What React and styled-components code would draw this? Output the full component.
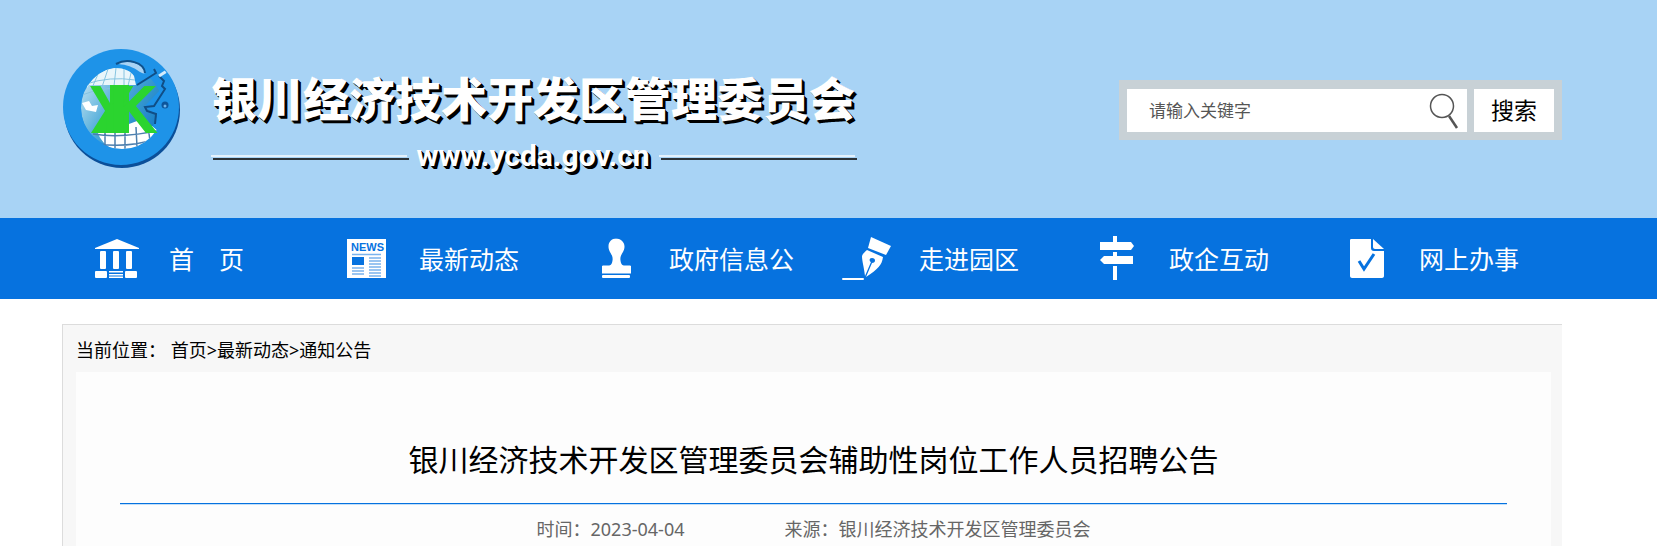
import styled, { createGlobalStyle } from "styled-components";

const GlobalStyle = createGlobalStyle`
  * {
    box-sizing: border-box;
  }
  body {
    margin: 0;
    background: #fff;
    color: #000;
    font-family: "Noto Sans", "Noto Sans CJK SC", sans-serif;
    font-size: 18px;
  }
  a {
    color: inherit;
    text-decoration: none;
  }
`;

const Container = styled.div`
  margin: 0 95px 0 62px;
`;

const Header = styled.header`
  background: #a8d3f5;
  height: 218px;
  padding-top: 47px;
`;

const HeaderRow = styled(Container)`
  display: flex;
  justify-content: space-between;
  align-items: flex-start;
`;

const Brand = styled.a`
  display: flex;
  gap: 29px;
`;

const BrandText = styled.div`
  display: flex;
  flex-direction: column;
  padding-top: 14px;
`;

const SiteName = styled.h1`
  margin: 0;
  font-family: "Noto Sans CJK SC", sans-serif;
  font-size: 46px;
  line-height: 70px;
  font-weight: 900;
  color: #fff;
  white-space: nowrap;
  text-shadow: 1px 1px 0 #000, 2px 2px 0 #000, 3px 3px 0 #000;
`;

const SiteUrl = styled.div`
  display: flex;
  align-items: center;
  gap: 9px;
  font-family: Roboto, sans-serif;
  font-size: 30px;
  line-height: 50px;
  font-weight: 700;
  color: #fff;
  text-shadow: 1px 1px 0 #000, 2px 2px 0 #000, 3px 3px 0 #000;

  &::before,
  &::after {
    content: "";
    flex: 1;
    height: 2px;
    background: #e4f2fd;
    box-shadow: 2px 3px 0 #2c3338;
  }
`;

const SearchForm = styled.form`
  display: flex;
  gap: 7px;
  margin-top: 33px;
  padding: 9px 8px 8px;
  background: #c8d1d6;
`;

const SearchField = styled.label`
  display: flex;
  align-items: center;
  width: 340px;
  height: 43px;
  padding: 0 8px 0 22px;
  background: #fff;
`;

const SearchInput = styled.input`
  flex: 1;
  min-width: 0;
  padding: 0;
  border: none;
  outline: none;
  background: transparent;
  font-family: inherit;
  font-size: 17px;
  color: #555;

  &::placeholder {
    color: #555;
    opacity: 1;
  }
`;

const SearchButton = styled.button`
  width: 80px;
  padding: 0 0 4px;
  border: none;
  background: #fff;
  color: #000;
  font-family: inherit;
  font-size: 23px;
  cursor: pointer;
`;

const Nav = styled.nav`
  background: #0672df;
`;

const NavList = styled.ul`
  display: grid;
  grid-template-columns: repeat(6, 1fr);
  margin: 0 95px 0 62px;
  padding: 0;
  list-style: none;
`;

const NavLink = styled.a`
  display: flex;
  align-items: center;
  gap: 27px;
  height: 81px;
  padding-left: 30px;
  color: #fff;
  font-size: 25px;
  line-height: 32px;
  white-space: nowrap;

  svg {
    flex: none;
  }
`;

const Panel = styled.main`
  margin: 25px 95px 0 62px;
  padding: 0 11px 0 13px;
  border: solid #dcdcdc;
  border-width: 1px 0 0 1px;
  background: #f7f7f7;
`;

const Breadcrumb = styled.div`
  display: flex;
  height: 47px;
  line-height: 50px;
  white-space: pre;
`;

const Article = styled.article`
  padding: 64px 44px 0;
  min-height: 174px;
  background: #fdfdfd;
`;

const ArticleTitle = styled.h2`
  margin: 0;
  padding-bottom: 19px;
  border-bottom: 1px solid #0672df;
  box-shadow: 0 1px 0 #c3dff8;
  font-size: 30px;
  line-height: 48px;
  font-weight: 400;
  text-align: center;
`;

const Meta = styled.div`
  display: flex;
  justify-content: center;
  gap: 100px;
  padding-top: 9px;
  line-height: 33px;
  color: #666;
`;

function Logo() {
  return (
    <svg width="120" height="124" viewBox="0 0 120 124" aria-hidden="true">
      <defs>
        <clipPath id="disc">
          <circle cx="59" cy="60" r="57" />
        </clipPath>
        <clipPath id="globe">
          <circle cx="60" cy="61" r="41" />
        </clipPath>
        <linearGradient id="sea" x1="0" y1="0" x2="1" y2="0.6">
          <stop offset="0" stopColor="#d6edf7" />
          <stop offset="0.5" stopColor="#4ba9d8" />
          <stop offset="1" stopColor="#167cc4" />
        </linearGradient>
      </defs>
      <circle cx="60" cy="63" r="58" fill="#0b4f99" />
      <circle cx="59" cy="60" r="58" fill="#1e93e8" />
      <g clipPath="url(#globe)">
        <path d="M53 21c9 0 16 3 19 8l2 10 22-11 7 10-20 21 12 10-4 10c-4 14-16 22-31 22-22 0-41-18-41-40S33 21 53 21z" fill="url(#sea)" />
        <path d="M25 41c6-12 16-19 28-20 9 0 16 3 19 8l2 9H24z" fill="#e9f6fb" />
        <path d="M20 56l7-2 3 5 6-1-2 7-10-2zM32 83l11-3 6 5 14 0 4-8 8-3 6 4 9 1 6 5-6 11c-6 6-14 9-28 9-12 0-22-6-27-20z" fill="#fff" />
        <path d="M24 37q24-8 49-4M20 48q20-8 45-7M37 25l-8 18M46 22l-6 18M54 21l-2 18M62 22v17M69 26l-3 13" stroke="#86c4e0" strokeWidth="1" fill="none" />
        <path d="M31 87q31 5 72-5M36 97q30 4 58-5M43 83v15M53 84v18M63 84v20M74 80l1 20M86 79l2 15" stroke="#4c7fae" strokeWidth="1.500" fill="none" />
      </g>
      <path d="M54 17c11-5 27-1 29 9-1 1-4 0-8-3-6-4-14-6-21-6z" fill="#a8d3f5" />
      <path d="M54 17c11-6 28-2 29 9" stroke="#10518b" strokeWidth="2" fill="none" />
      <g clipPath="url(#disc)" fill="none">
        <path d="M75 38l19-12-2-4M97 29l5 5-2 5 3 3-11 17-9 1 2 4 9 3-1 10" stroke="#104e86" strokeWidth="2" />
        <path d="M97 29l14-9" stroke="#d4ebfb" strokeWidth="3" />
      </g>
      <circle cx="103" cy="58" r="3.500" fill="#0d559b" />
      <circle cx="103" cy="59" r="1.500" fill="#6db5ed" />
      <g fill="#2bd42f">
        <path d="M48 38h19v48H29l19-30z" />
        <text x="27 47" y="86" fontFamily="Liberation Sans" fontSize="68" fontWeight="700">
          YK
        </text>
      </g>
    </svg>
  );
}

function SearchIcon() {
  return (
    <svg width="30" height="38" viewBox="0 0 30 38" fill="none" aria-hidden="true">
      <circle cx="13" cy="14" r="11.500" stroke="#555" strokeWidth="1.500" />
      <path d="M20 24l8 12" stroke="#555" strokeWidth="2.500" />
    </svg>
  );
}

function NavIcon({ children }) {
  return (
    <svg width="50" height="50" viewBox="0 0 50 50" fill="#fff" aria-hidden="true">
      {children}
    </svg>
  );
}

const HomeIcon = () => (
  <NavIcon>
    <path d="M3 14L25 5l22 9v1H3z" />
    <rect x="8" y="17" width="6" height="18" rx="1" />
    <rect x="21" y="17" width="6" height="18" rx="1" />
    <rect x="34" y="17" width="6" height="18" rx="1" />
    <rect x="3" y="37" width="12" height="7" rx="1" />
    <rect x="33" y="37" width="12" height="7" rx="1" />
    <path d="M17 37h14v1.500H17zM17 40h14v1.500H17zM17 42.500h14V44H17z" />
  </NavIcon>
);

const NewsIcon = () => (
  <NavIcon>
    <rect x="5" y="5" width="39" height="39" />
    <text x="9" y="17" fill="#0672df" fontFamily="Liberation Sans" fontSize="11" fontWeight="700">
      NEWS
    </text>
    <rect x="10" y="23" width="12" height="8" fill="#0672df" />
    <path d="M10 20.500h29M27 24h12M27 27h12M27 30h12M10 34h12M27 33h12M10 37h12M27 36h12M10 40h12M27 39h12M27 42h12" stroke="#7ab3ed" strokeWidth="1.500" />
  </NavIcon>
);

const StampIcon = () => (
  <NavIcon>
    <path d="M24.500 4.500c-5 0-8 3.500-8 8 0 6 5 8 4 14-.5 4-2 5-4 5H11c-1 0-1 1-1 1v7h29v-7s0-1-1-1h-5.500c-2 0-3.500-1-4-5-1-6 4-8 4-14 0-4.500-4-8-9-8z" />
    <rect x="10" y="41" width="28" height="3" rx="1" />
  </NavIcon>
);

const PenIcon = () => (
  <NavIcon>
    <path d="M29 3l20 9-5 9-18-7z" />
    <path d="M25 16l16 7c-1 8-5 12-17 20l6-14c4 0 4-5 0-5-3 0-3 3-1 4l-6 14c-1-9-3-15-3-20 1-3 3-4 5-6z" />
    <rect y="44" width="22" height="2" rx="1" />
  </NavIcon>
);

const SignIcon = () => (
  <NavIcon>
    <path d="M21 2h4v6h14l3 4-3 4H8V8h13zM21 18h4v4h16v8H12l-4-4 4-4h9zM21 32h4v14h-4z" />
  </NavIcon>
);

const FormIcon = () => (
  <NavIcon>
    <path d="M9 5h20v9c0 2 1 3 3 3h10v25c0 1-1 2-2 2H10c-1 0-2-1-2-2V7c0-1 0-2 1-2z" />
    <path d="M31 5l11 10h-9c-1 0-2-1-2-2z" />
    <path d="M17 27l5 8 10-15" stroke="#0672df" strokeWidth="3" fill="none" />
  </NavIcon>
);

const navItems = [
  { label: "首　页", Icon: HomeIcon },
  { label: "最新动态", Icon: NewsIcon },
  { label: "政府信息公", Icon: StampIcon },
  { label: "走进园区", Icon: PenIcon },
  { label: "政企互动", Icon: SignIcon },
  { label: "网上办事", Icon: FormIcon },
];

export default function App() {
  return (
    <>
      <GlobalStyle />
      <Header>
        <HeaderRow>
          <Brand href="#">
            <Logo />
            <BrandText>
              <SiteName>银川经济技术开发区管理委员会</SiteName>
              <SiteUrl>www.ycda.gov.cn</SiteUrl>
            </BrandText>
          </Brand>
          <SearchForm onSubmit={(e) => e.preventDefault()}>
            <SearchField htmlFor="keyword">
              <SearchInput id="keyword" name="keyword" type="text" placeholder="请输入关键字" />
              <SearchIcon />
            </SearchField>
            <SearchButton type="submit">搜索</SearchButton>
          </SearchForm>
        </HeaderRow>
      </Header>
      <Nav>
        <NavList>
          {navItems.map(({ label, Icon }) => (
            <li key={label}>
              <NavLink href="#">
                <Icon />
                {label}
              </NavLink>
            </li>
          ))}
        </NavList>
      </Nav>
      <Panel>
        <Breadcrumb>
          <span>当前位置： </span>
          <a href="#">首页</a>&gt;<a href="#">最新动态</a>&gt;<a href="#">通知公告</a>
        </Breadcrumb>
        <Article>
          <ArticleTitle>银川经济技术开发区管理委员会辅助性岗位工作人员招聘公告</ArticleTitle>
          <Meta>
            <span>时间：2023-04-04</span>
            <span>来源：银川经济技术开发区管理委员会</span>
          </Meta>
        </Article>
      </Panel>
    </>
  );
}
